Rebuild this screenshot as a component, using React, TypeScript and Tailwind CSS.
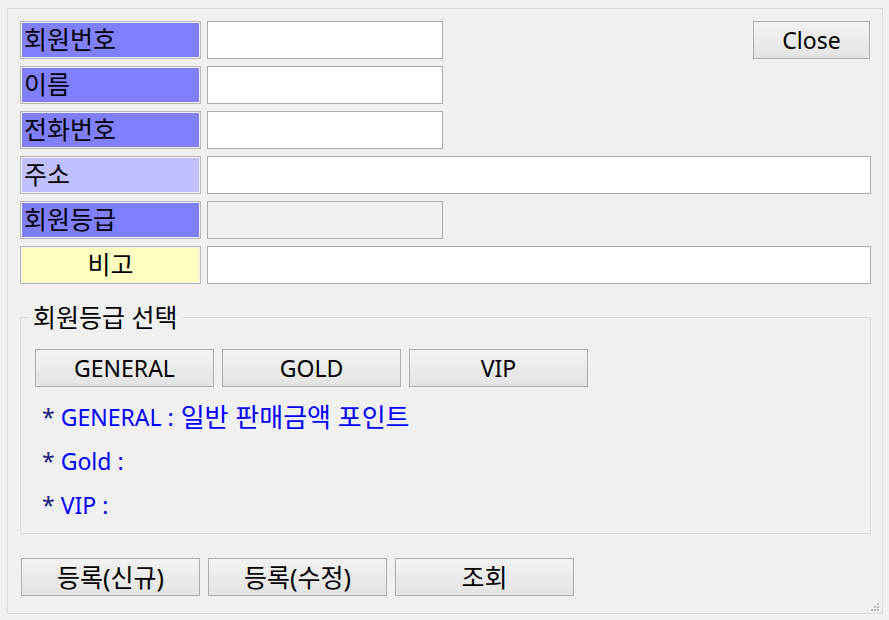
import React from 'react';

const font = { fontFamily: '"Noto Sans", "Noto Sans CJK KR", sans-serif' };

function Label({ text, tone }: { text: string; tone: 'blue' | 'light' | 'yellow' }) {
  const bg = tone === 'blue' ? 'bg-[#8080ff]' : tone === 'light' ? 'bg-[#c0c0ff]' : 'bg-[#ffffc0]';
  return (
    <div className="w-[181px] h-[38px] shrink-0 border border-[#b9b9b9] p-px">
      <div
        className={`h-full ${bg} flex items-center pb-[1px] text-[25px] leading-none text-black ${
          tone === 'yellow' ? 'justify-center' : 'pl-[2px]'
        }`}
      >
        {text}
      </div>
    </div>
  );
}

function Field({ wide, disabled }: { wide?: boolean; disabled?: boolean }) {
  return (
    <div
      className={`h-[38px] border border-[#acacac] ${disabled ? 'bg-[#f0f0f0]' : 'bg-white'} ${
        wide ? 'w-[664px]' : 'w-[236px]'
      }`}
    />
  );
}

function Btn({ children, w = 'w-[179px]', size = 'text-[23px]' }: { children: React.ReactNode; w?: string; size?: string }) {
  return (
    <button
      className={`${w} ${size} h-[38px] border border-[#adadad] bg-gradient-to-b from-[#f2f2f2] to-[#e3e3e3] leading-none text-black flex items-center justify-center`}
    >
      {children}
    </button>
  );
}

export default function App() {
  return (
    <div className="w-[889px] h-[620px] bg-[#f0f0f0] pt-[8px] pl-[7px] overflow-hidden" style={font}>
      <div className="relative w-[876px] h-[606px] border border-[#dcdcdc] pt-[12px] pl-[12px]">
        <div className="flex flex-col gap-[7px]">
          <div className="flex gap-[6px]">
            <Label text="회원번호" tone="blue" />
            <Field />
            <div className="ml-auto mr-[12px]">
              <Btn w="w-[117px]">Close</Btn>
            </div>
          </div>
          <div className="flex gap-[6px]">
            <Label text="이름" tone="blue" />
            <Field />
          </div>
          <div className="flex gap-[6px]">
            <Label text="전화번호" tone="blue" />
            <Field />
          </div>
          <div className="flex gap-[6px]">
            <Label text="주소" tone="light" />
            <Field wide />
          </div>
          <div className="flex gap-[6px]">
            <Label text="회원등급" tone="blue" />
            <Field disabled />
          </div>
          <div className="flex gap-[6px]">
            <Label text="비고" tone="yellow" />
            <Field wide />
          </div>
        </div>

        <fieldset className="mt-[21px] w-[851px] h-[229px] border border-[#dcdcdc] px-[14px]">
          <legend className="text-[25px] leading-[24px] px-[4px] -ml-[6px] text-black">회원등급 선택</legend>
          <div className="flex gap-[8px] mt-[20px]">
            <Btn>GENERAL</Btn>
            <Btn>GOLD</Btn>
            <Btn>VIP</Btn>
          </div>
          <div className="mt-[8px] pl-[7px] text-[23px] text-[#0000ff]">
            <div className="h-[44px] flex items-center gap-[6px]">
              <span className="text-[#20207a]">*</span>
              <span>GENERAL :</span>
              <span className="text-[26px] ml-[1px]">일반 판매금액 포인트</span>
            </div>
            <div className="h-[44px] flex items-center gap-[6px]">
              <span className="text-[#20207a]">*</span>
              <span>Gold :</span>
            </div>
            <div className="h-[44px] flex items-center gap-[6px]">
              <span className="text-[#20207a]">*</span>
              <span>VIP :</span>
            </div>
          </div>
        </fieldset>

        <div className="flex gap-[8px] mt-[24px] pl-[1px]">
          <Btn size="text-[25px]">등록(신규)</Btn>
          <Btn size="text-[25px]">등록(수정)</Btn>
          <Btn size="text-[25px]">조회</Btn>
        </div>

        <svg className="absolute right-[2px] bottom-[1px]" width="10" height="10" viewBox="0 0 10 10">
          <rect x="7" y="1" width="2" height="2" fill="#b8b8b8" />
          <rect x="4" y="4" width="2" height="2" fill="#b8b8b8" />
          <rect x="7" y="4" width="2" height="2" fill="#b8b8b8" />
          <rect x="1" y="7" width="2" height="2" fill="#b8b8b8" />
          <rect x="4" y="7" width="2" height="2" fill="#b8b8b8" />
          <rect x="7" y="7" width="2" height="2" fill="#b8b8b8" />
        </svg>
      </div>
    </div>
  );
}
